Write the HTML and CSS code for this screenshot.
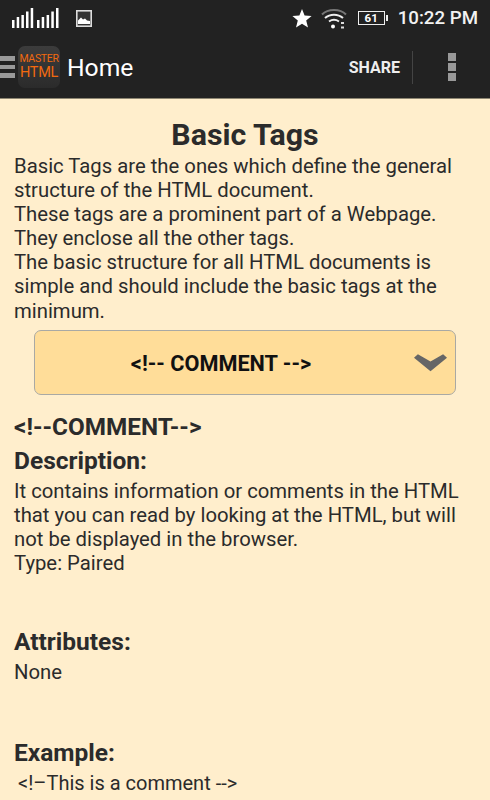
FILE: index.html
```html
<!DOCTYPE html>
<html lang="en">
<head>
    <meta charset="UTF-8">
    <meta name="viewport" content="width=device-width, initial-scale=1.0">
    <title>Master HTML</title>
    <link rel="stylesheet" href="styles.css">
</head>
<body>
    <div class="phone">
        <div class="status-bar">
            <div class="status-left">
                <svg class="signal" width="48" height="22" viewBox="0 0 48 22">
                    <g fill="#fff">
                        <rect x="0" y="13" width="2.500" height="8"/>
                        <rect x="4.700" y="10" width="2.500" height="11"/>
                        <rect x="9.400" y="8" width="2.500" height="13"/>
                        <rect x="14" y="4.500" width="2.500" height="16.500"/>
                        <rect x="18.700" y="1" width="2.500" height="20"/>
                        <rect x="25" y="13" width="2.500" height="8"/>
                        <rect x="29.700" y="10" width="2.500" height="11"/>
                        <rect x="34.600" y="8" width="2.500" height="13"/>
                        <rect x="39.300" y="4.500" width="2.500" height="16.500"/>
                        <rect x="44" y="1" width="2.500" height="20"/>
                    </g>
                </svg>
                <svg class="picture" width="16" height="17" viewBox="0 0 16 17">
                    <rect x="0.800" y="0.800" width="14.400" height="15.400" fill="#333" stroke="#ddd" stroke-width="1.600"/>
                    <path d="M2 14V10.500L5 7.500L7 9.500L9 8.500L11 10.500L14 11V14Z" fill="#fff"/>
                </svg>
            </div>
            <div class="status-right">
                <svg width="20" height="19" viewBox="0 0 20 19">
                    <path d="M10 0L12.600 6.400L19.600 7L14.200 11.500L16 18.400L10 14.700L4 18.400L5.800 11.500L.4 7L7.400 6.400Z" fill="#fff"/>
                </svg>
                <svg class="wifi" width="26" height="21" viewBox="0 0 26 21">
                    <g fill="none" stroke-width="2">
                        <path d="M1 6.500C7 .5 19 .5 25 6.500" stroke="#777"/>
                        <path d="M4 10C9 5.500 17 5.500 22 10" stroke="#eee"/>
                        <path d="M8 13.500C11 11.500 15 11.500 18 13.500" stroke="#eee"/>
                    </g>
                    <circle cx="12" cy="18.500" r="2" fill="#fff"/>
                    <rect x="20" y="14" width="3" height="2" fill="#ddd"/>
                    <rect x="20" y="18.500" width="3" height="2" fill="#ddd"/>
                </svg>
                <div class="battery"><span class="battery-level">61</span></div>
                <span class="clock">10:22 PM</span>
            </div>
        </div>

        <div class="action-bar">
            <div class="drawer-icon"><span></span><span></span><span></span></div>
            <div class="app-logo"><span class="logo-top">MASTER</span><span class="logo-bottom">HTML</span></div>
            <div class="bar-title">Home</div>
            <div class="share-btn">SHARE</div>
            <div class="overflow-icon"><span></span><span></span><span></span></div>
        </div>

        <div class="content">
            <h1>Basic Tags</h1>
            <p>Basic Tags are the ones which define the general structure of the HTML document.<br>
            These tags are a prominent part of a Webpage. They enclose all the other tags.<br>
            The basic structure for all HTML documents is simple and should include the basic tags at the minimum.</p>

            <div class="dropdown">
                <span class="dropdown-label">&lt;!-- COMMENT --&gt;</span>
                <svg class="dropdown-arrow" width="33" height="18" viewBox="0 0 34 18">
                    <path d="M0 3.500L4 0L17 7.500L30 0L34 3.500L17 17.500Z" fill="#666"/>
                </svg>
            </div>

            <h2 class="tag-name">&lt;!--COMMENT--&gt;</h2>
            <h3>Description:</h3>
            <p>It contains information or comments in the HTML that you can read by looking at the HTML, but will not be displayed in the browser.<br>Type: Paired</p>
            <h3 class="gap">Attributes:</h3>
            <p class="none">None</p>
            <h3 class="gap">Example:</h3>
            <p class="code">&lt;!–This is a comment --&gt;</p>
        </div>
    </div>
</body>
</html>
```

FILE: styles.css
```css
html, body {
    margin: 0;
    padding: 0;
}
body {
    font-family: Roboto, sans-serif;
    background-color: #ffeecc;
    color: #2b2b2b;
}
.phone {
    width: 490px;
    height: 800px;
    overflow: hidden;
}
.status-bar {
    height: 36px;
    background: #222222;
    color: #f2f2f2;
    display: flex;
    justify-content: space-between;
    align-items: center;
    padding: 0 12px;
}
.status-left {
    display: flex;
    align-items: center;
    gap: 16px;
}
.status-right {
    display: flex;
    align-items: center;
}
.wifi {
    margin-left: 9px;
}
.battery {
    width: 27px;
    height: 14px;
    box-sizing: border-box;
    border: 1.500px solid #eee;
    margin-left: 11px;
    margin-right: 13px;
    display: flex;
    align-items: center;
    justify-content: center;
    position: relative;
}
.battery::after {
    content: "";
    position: absolute;
    right: -4px;
    top: 2.500px;
    width: 2px;
    height: 6px;
    background: #eee;
}
.battery-level {
    font-size: 11.500px;
    font-weight: 700;
    color: #fff;
}
.clock {
    font-size: 18.700px;
    font-weight: 500;
}
.action-bar {
    height: 62px;
    background: #222222;
    border-bottom: 1px solid #8d8672;
    display: flex;
    align-items: center;
    color: #fff;
}
.drawer-icon {
    width: 15px;
    display: flex;
    flex-direction: column;
    gap: 4px;
}
.drawer-icon span {
    display: block;
    height: 4.500px;
    background: #999;
}
.app-logo {
    width: 42px;
    height: 42px;
    margin-left: 3px;
    background: linear-gradient(#3c3c3c, #2b2b2b);
    border-radius: 7px;
    display: flex;
    flex-direction: column;
    align-items: center;
    justify-content: center;
    color: #f26a0f;
    line-height: 1;
}
.logo-top {
    font-size: 10.500px;
    letter-spacing: -0.300px;
}
.logo-bottom {
    font-size: 14.500px;
    letter-spacing: -0.300px;
    margin-top: 1px;
}
.bar-title {
    font-size: 24.700px;
    margin-left: 7px;
    flex: 1;
}
.share-btn {
    font-size: 16px;
    font-weight: 700;
    color: #eee;
    padding-right: 12px;
    height: 33px;
    line-height: 33px;
    border-right: 1px solid #444;
}
.overflow-icon {
    width: 77px;
    display: flex;
    flex-direction: column;
    align-items: center;
    gap: 2px;
}
.overflow-icon span {
    width: 8px;
    height: 8px;
    background: #999;
}
.content {
    padding: 18px 14px 0;
}
h1 {
    font-size: 30.300px;
    line-height: 35px;
    font-weight: 700;
    text-align: center;
    margin: 0 0 2px;
}
p {
    font-size: 20.300px;
    line-height: 24.100px;
    margin: 0;
}
.dropdown {
    height: 65px;
    box-sizing: border-box;
    margin: 7.500px 20px 0;
    background: #ffdd99;
    border: 1.500px solid #a9a9a4;
    border-radius: 7px;
    display: flex;
    align-items: center;
    justify-content: center;
    position: relative;
}
.dropdown-label {
    font-size: 21.700px;
    font-weight: 700;
    color: #111;
    margin: 2px 48px 0 0;
}
.dropdown-arrow {
    position: absolute;
    right: 8px;
    top: 22.500px;
}
.tag-name {
    font-size: 24.300px;
    line-height: 30px;
    font-weight: 700;
    margin: 17px 0 0;
}
h3 {
    font-size: 24.500px;
    line-height: 30px;
    font-weight: 700;
    margin: 4px 0 3px;
}
h3.gap {
    margin-top: 51px;
}
.none {
    margin-bottom: 54px;
}
.none + h3.gap {
    margin-top: 0;
}
.code {
    padding-left: 4px;
    font-size: 20px;
}
```
